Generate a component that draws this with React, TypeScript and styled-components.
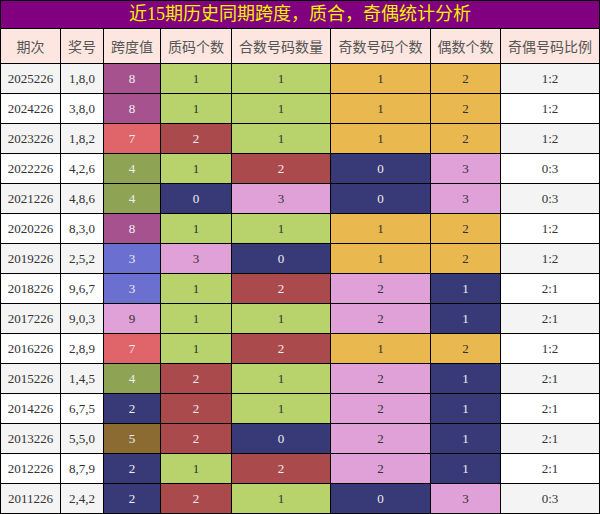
import React from "react";
import styled, { createGlobalStyle } from "styled-components";

const Global = createGlobalStyle`
  html, body { margin: 0; padding: 0; background: #fff; }
`;

const Table = styled.div`
  display: grid;
  grid-template-columns: 59px 42px 56px 70px 98px 99px 69px 98px;
  grid-template-rows: 27px 34px;
  grid-auto-rows: 29px;
  gap: 1px;
  padding: 1px;
  background: #000;
  width: 600px;
  box-sizing: border-box;
`;

const Title = styled.div`
  grid-column: 1 / -1;
  background: #800080;
  color: #f5f000;
  font-family: "Liberation Serif", "Noto Sans CJK SC", serif;
  font-size: 18px;
  line-height: 27px;
  text-align: center;
`;

const Head = styled.div`
  background: #fde6e0;
  color: #555;
  font-family: "Noto Sans CJK SC", sans-serif;
  font-size: 14px;
  display: flex;
  align-items: center;
  justify-content: center;
`;

const Cell = styled.div<{ $bg: string; $dark?: boolean }>`
  background: ${(p) => p.$bg};
  color: ${(p) => (p.$dark ? "#eee" : "#333")};
  font-family: "Liberation Serif", serif;
  font-size: 13px;
  display: flex;
  align-items: center;
  justify-content: center;
`;

const C = {
  green: "#b8d36c",
  orange: "#e9b94f",
  purple: "#a5528f",
  rose: "#e0656b",
  red: "#ab4a4c",
  olive: "#8fa355",
  navy: "#383a78",
  pink: "#e0a0d8",
  blue: "#6b70d0",
  brown: "#8b6b32",
};
const DARK = new Set([C.purple, C.rose, C.red, C.olive, C.navy, C.blue, C.brown]);

const spanColor: Record<number, string> = {
  8: C.purple, 7: C.rose, 4: C.olive, 3: C.blue, 9: C.pink, 2: C.navy, 5: C.brown,
};
const countColor: Record<number, string> = { 0: C.navy, 1: C.green, 2: C.red, 3: C.pink };
const oddColor: Record<number, string> = { 0: C.navy, 1: C.orange, 2: C.pink, 3: C.pink };
const evenColor: Record<number, string> = { 1: C.navy, 2: C.orange, 3: C.pink, 0: C.navy };

type Row = [string, string, number, number, number, number, number, string];
const rows: Row[] = [
  ["2025226", "1,8,0", 8, 1, 1, 1, 2, "1:2"],
  ["2024226", "3,8,0", 8, 1, 1, 1, 2, "1:2"],
  ["2023226", "1,8,2", 7, 2, 1, 1, 2, "1:2"],
  ["2022226", "4,2,6", 4, 1, 2, 0, 3, "0:3"],
  ["2021226", "4,8,6", 4, 0, 3, 0, 3, "0:3"],
  ["2020226", "8,3,0", 8, 1, 1, 1, 2, "1:2"],
  ["2019226", "2,5,2", 3, 3, 0, 1, 2, "1:2"],
  ["2018226", "9,6,7", 3, 1, 2, 2, 1, "2:1"],
  ["2017226", "9,0,3", 9, 1, 1, 2, 1, "2:1"],
  ["2016226", "2,8,9", 7, 1, 2, 1, 2, "1:2"],
  ["2015226", "1,4,5", 4, 2, 1, 2, 1, "2:1"],
  ["2014226", "6,7,5", 2, 2, 1, 2, 1, "2:1"],
  ["2013226", "5,5,0", 5, 2, 0, 2, 1, "2:1"],
  ["2012226", "8,7,9", 2, 1, 2, 2, 1, "2:1"],
  ["2011226", "2,4,2", 2, 2, 1, 0, 3, "0:3"],
];

const headers = ["期次", "奖号", "跨度值", "质码个数", "合数号码数量", "奇数号码个数", "偶数个数", "奇偶号码比例"];

const Colored = ({ bg, v }: { bg: string; v: number }) => (
  <Cell $bg={bg} $dark={DARK.has(bg)}>{v}</Cell>
);

export default function App() {
  return (
    <>
      <Global />
      <Table>
        <Title>近15期历史同期跨度，质合，奇偶统计分析</Title>
        {headers.map((h) => (
          <Head key={h}>{h}</Head>
        ))}
        {rows.map((r, i) => {
          const plain = i % 2 === 0 ? "#f4f4f4" : "#ffffff";
          return (
            <React.Fragment key={r[0]}>
              <Cell $bg={plain}>{r[0]}</Cell>
              <Cell $bg={plain}>{r[1]}</Cell>
              <Colored bg={spanColor[r[2]]} v={r[2]} />
              <Colored bg={countColor[r[3]]} v={r[3]} />
              <Colored bg={countColor[r[4]]} v={r[4]} />
              <Colored bg={oddColor[r[5]]} v={r[5]} />
              <Colored bg={evenColor[r[6]]} v={r[6]} />
              <Cell $bg={plain}>{r[7]}</Cell>
            </React.Fragment>
          );
        })}
      </Table>
    </>
  );
}
